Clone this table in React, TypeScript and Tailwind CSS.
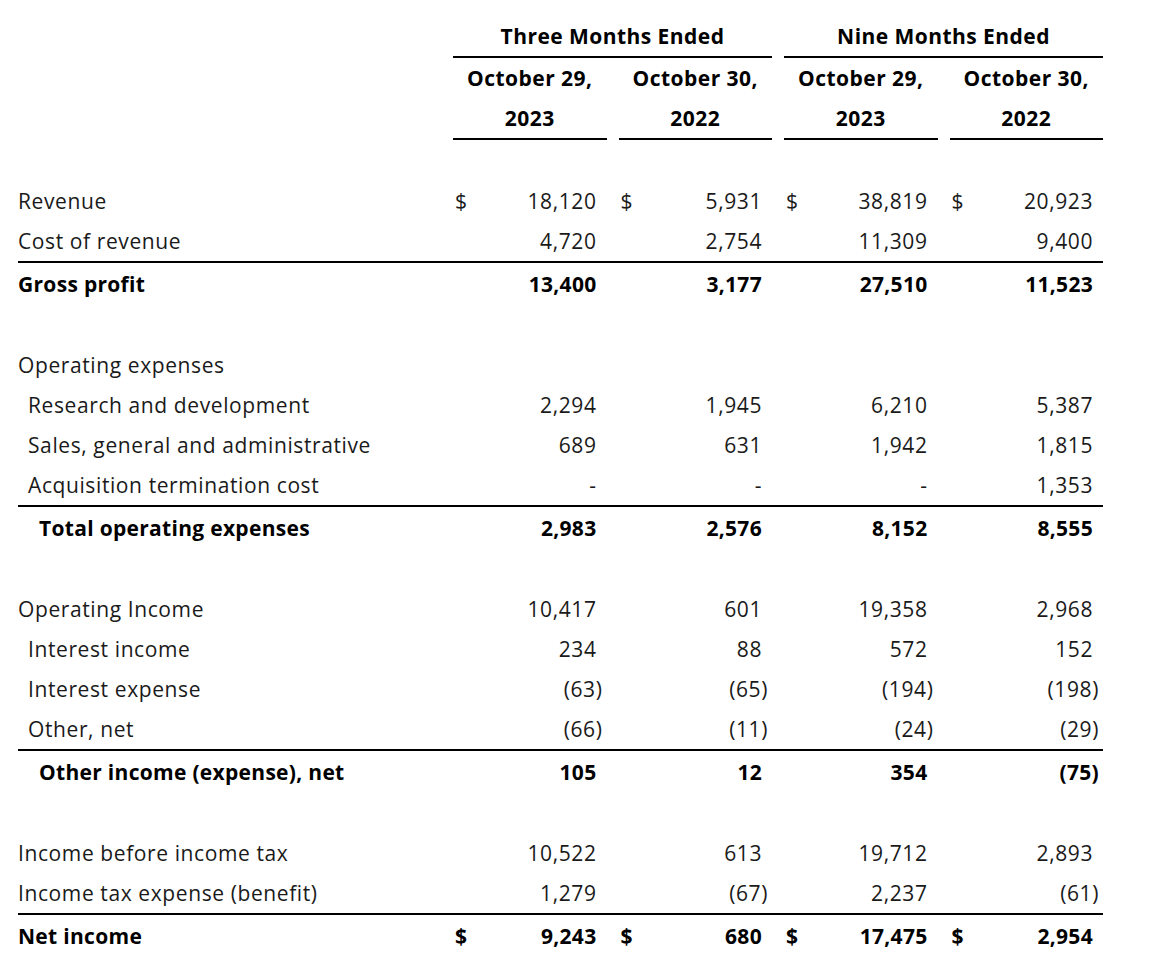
type Row = {
  label: string;
  indent?: 0 | 1 | 2;
  bold?: boolean;
  dollar?: boolean;
  rule?: boolean;
  values?: string[];
};

const rows: (Row | null)[] = [
  { label: "Revenue", dollar: true, values: ["18,120", "5,931", "38,819", "20,923"] },
  { label: "Cost of revenue", values: ["4,720", "2,754", "11,309", "9,400"] },
  { label: "Gross profit", bold: true, rule: true, values: ["13,400", "3,177", "27,510", "11,523"] },
  null,
  { label: "Operating expenses" },
  { label: "Research and development", indent: 1, values: ["2,294", "1,945", "6,210", "5,387"] },
  { label: "Sales, general and administrative", indent: 1, values: ["689", "631", "1,942", "1,815"] },
  { label: "Acquisition termination cost", indent: 1, values: ["-", "-", "-", "1,353"] },
  { label: "Total operating expenses", indent: 2, bold: true, rule: true, values: ["2,983", "2,576", "8,152", "8,555"] },
  null,
  { label: "Operating Income", values: ["10,417", "601", "19,358", "2,968"] },
  { label: "Interest income", indent: 1, values: ["234", "88", "572", "152"] },
  { label: "Interest expense", indent: 1, values: ["(63)", "(65)", "(194)", "(198)"] },
  { label: "Other, net", indent: 1, values: ["(66)", "(11)", "(24)", "(29)"] },
  { label: "Other income (expense), net", indent: 2, bold: true, rule: true, values: ["105", "12", "354", "(75)"] },
  null,
  { label: "Income before income tax", values: ["10,522", "613", "19,712", "2,893"] },
  { label: "Income tax expense (benefit)", values: ["1,279", "(67)", "2,237", "(61)"] },
  { label: "Net income", bold: true, dollar: true, rule: true, values: ["9,243", "680", "17,475", "2,954"] },
];

const grid = "grid grid-cols-[423px_repeat(4,153.5px)] gap-x-3";

function StatementRow({ row }: { row: Row }) {
  const pad = row.indent === 2 ? "pl-[21px]" : row.indent === 1 ? "pl-[10px]" : "";
  return (
    <div
      className={`${grid} items-center ${
        row.bold ? "font-bold tracking-[0.3px] text-black" : "tracking-[0.6px]"
      } ${row.rule ? "h-[43px] border-t-2 border-black" : "h-10"}`}
    >
      <div className={`${pad} whitespace-nowrap`}>{row.label}</div>
      {row.values?.map((v, i) => (
        <div key={i} className="flex items-center justify-between pl-[2px] pr-[10px]">
          <span>{row.dollar ? "$" : ""}</span>
          <span className={v.endsWith(")") ? "-mr-[6px]" : ""}>{v}</span>
        </div>
      ))}
    </div>
  );
}

export default function App() {
  const dates = [
    ["October 29,", "2023"],
    ["October 30,", "2022"],
    ["October 29,", "2023"],
    ["October 30,", "2022"],
  ];

  return (
    <div className="min-h-screen w-[1156px] bg-white pt-4 font-['Open_Sans','Liberation_Sans',sans-serif] text-[21px] leading-10 text-[#1a1a1a]">
      <div className="ml-[18px] w-[1085px]">
        <div className={`${grid} font-bold tracking-[0.45px] text-black`}>
          <div />
          <div className="col-span-2 border-b-2 border-black text-center">Three Months Ended</div>
          <div className="col-span-2 border-b-2 border-black text-center">Nine Months Ended</div>
        </div>
        <div className={`${grid} font-bold tracking-[0.45px] text-black`}>
          <div />
          {dates.map(([d, y], i) => (
            <div key={i} className="border-b-2 border-black text-center">
              <div>{d}</div>
              <div>{y}</div>
            </div>
          ))}
        </div>
        <div className="h-[41px]" />
        {rows.map((row, i) => (row ? <StatementRow key={i} row={row} /> : <div key={i} className="h-[41px]" />))}
      </div>
    </div>
  );
}
